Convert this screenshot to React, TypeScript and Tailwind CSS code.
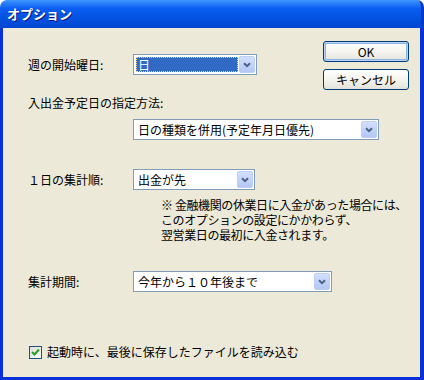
import React from "react";

const font = "font-['Noto_Sans_CJK_JP','Noto_Sans',sans-serif]";

function Combo({
  width,
  text,
  focused = false,
}: {
  width: string;
  text: string;
  focused?: boolean;
}) {
  return (
    <div className={`${width} shrink-0 h-[21px] border border-[#7F9DB9] bg-white flex items-stretch p-[1px]`}>
      <div className="flex-1 flex items-center min-w-0 p-[1px]">
        {focused ? (
          <div className="h-full w-full bg-[#316AC5] outline-1 outline-dotted outline-[#F5D08A] -outline-offset-1 flex items-center pl-[2px] text-white">
            {text}
          </div>
        ) : (
          <span className="pl-[2px] text-black whitespace-nowrap">{text}</span>
        )}
      </div>
      <div className="w-[16px] rounded-[2px] border border-[#BCCFF8] bg-gradient-to-b from-[#D2DFFD] to-[#B3C7F5] flex items-center justify-center">
        <svg width="8" height="6" viewBox="0 0 8 6">
          <path d="M1 1.2 L4 4.2 L7 1.2" fill="none" stroke="#4D6185" strokeWidth="2" />
        </svg>
      </div>
    </div>
  );
}

function XpButton({ label, isDefault = false }: { label: string; isDefault?: boolean }) {
  return (
    <button
      className={`w-[86px] h-[21px] rounded-[3px] border border-[#003C74] bg-gradient-to-b from-[#FFFFFF] via-[#F5F4EF] to-[#E3E2DA] text-[12px] text-black flex items-center justify-center ${
        isDefault ? "shadow-[inset_0_0_0_1px_#BCD4F6,inset_0_0_0_2px_#8DB2E3]" : ""
      }`}
    >
      {label}
    </button>
  );
}

export default function App() {
  return (
    <div className={`w-[424px] h-[380px] flex flex-col overflow-hidden ${font} text-[12px] text-black`}>
      {/* Title bar */}
      <div className="h-[28px] shrink-0 rounded-t-[7px] bg-gradient-to-b from-[#3D95FF] via-[#0A5EF2] via-30% to-[#0046D0] border-r-[3px] border-[#0538C8] flex items-center pl-[7px]">
        <span className="text-white font-bold text-[13px] [text-shadow:1px_1px_#0A1883]">オプション</span>
      </div>

      {/* Body */}
      <div className="flex-1 flex border-l-[3px] border-r-[4px] border-b-[3px] border-[#0831D9] bg-[#ECE9D8]">
        <div className="flex-1 min-w-0 w-0 flex flex-col pl-[25px]">
          <div className="mt-[26px] h-[21px] flex items-center">
            <span className="w-[105px] shrink-0">週の開始曜日:</span>
            <Combo width="w-[124px]" text="日" focused />
          </div>

          <div className="mt-[21px] h-[14px] leading-[14px]">入出金予定日の指定方法:</div>

          <div className="mt-[9px] ml-[105px]">
            <Combo width="w-[246px]" text="日の種類を併用(予定年月日優先)" />
          </div>

          <div className="mt-[29px] h-[21px] flex items-center">
            <span className="w-[105px] shrink-0">１日の集計順:</span>
            <Combo width="w-[122px]" text="出金が先" />
          </div>

          {/* note, one text block */}
          <p className="mt-[7px] ml-[133px] leading-[15px] whitespace-nowrap tracking-[-0.4px]">
            ※ 金融機関の休業日に入金があった場合には、
            <br />
            このオプションの設定にかかわらず、
            <br />
            翌営業日の最初に入金されます。
          </p>

          <div className="mt-[29px] h-[21px] flex items-center">
            <span className="w-[105px] shrink-0">集計期間:</span>
            <Combo width="w-[199px]" text="今年から１０年後まで" />
          </div>

          <div className="mt-[51px] flex items-center ml-[1px]">
            <div className="w-[13px] h-[13px] shrink-0 border border-[#1C5180] bg-gradient-to-br from-[#DCDCD7] to-[#FFFFFF] flex items-center justify-center">
              <svg width="9" height="9" viewBox="0 0 9 9">
                <path d="M1 4 L3.5 6.5 L8 1.5" fill="none" stroke="#21A121" strokeWidth="2" />
              </svg>
            </div>
            <span className="ml-[5px] whitespace-nowrap">起動時に、最後に保存したファイルを読み込む</span>
          </div>
        </div>

        <div className="w-[86px] shrink-0 mr-[11px] pt-[13px] flex flex-col gap-[7px]">
          <XpButton label="OK" isDefault />
          <XpButton label="キャンセル" />
        </div>
      </div>
    </div>
  );
}
